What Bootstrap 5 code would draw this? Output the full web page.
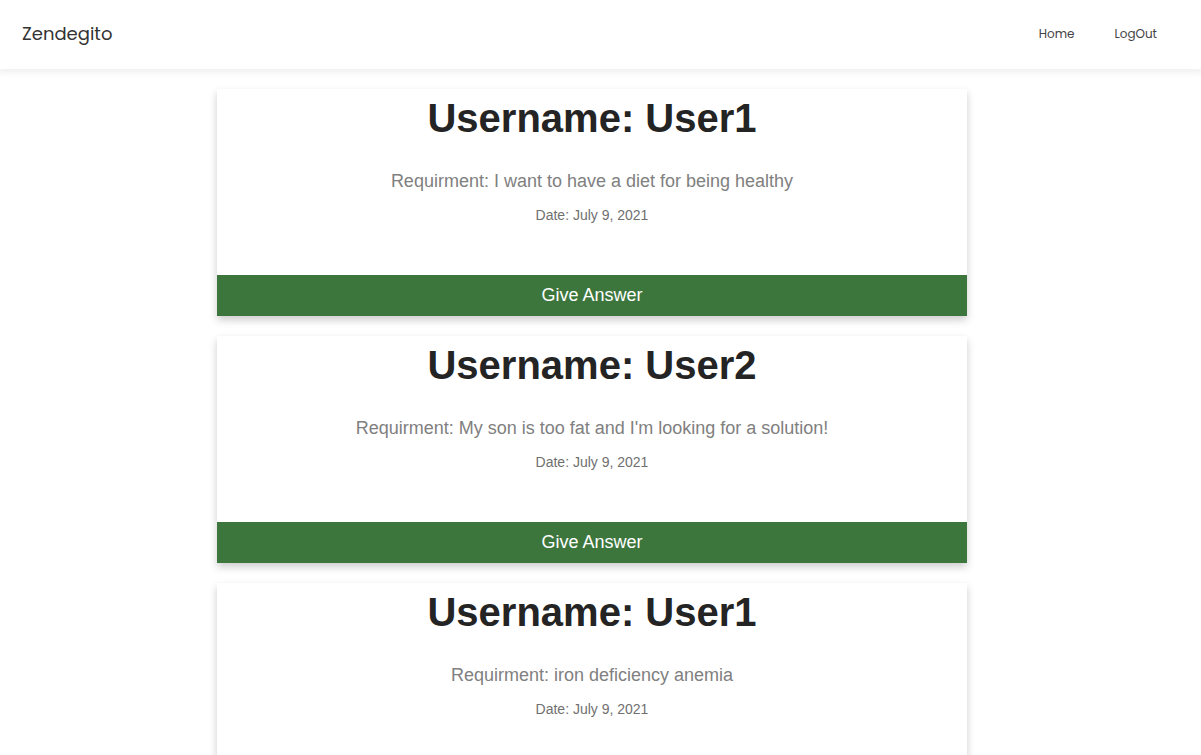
<!DOCTYPE html>
<html lang="en">
<head>
<meta charset="utf-8">
<meta name="viewport" content="width=device-width, initial-scale=1">
<title>Zendegito</title>
<link href="https://cdn.jsdelivr.net/npm/bootstrap@5.3.0/dist/css/bootstrap.min.css" rel="stylesheet">
<style>
body { font-family: "Liberation Sans", Arial, sans-serif; background: #fff; color: #212529; }
.site-nav { min-height: 69px; padding: 0 36px 2px 22px; font-family: Poppins, Inter, sans-serif; background: #fff; box-shadow: 0 2px 6px 2px rgba(0,0,0,.06); }
.site-nav .navbar-brand { font-size: 18px; line-height: 24px; color: #333; }
.site-nav .nav-link { font-size: 12px; line-height: 20px; color: #444; }
.request-list { gap: 20px; padding: 20px 17px 20px 0; }
.request-card { width: 750px; max-width: 100%; background: #fff; box-shadow: 0 4px 8px 0 rgba(0,0,0,.2); }
.request-card h1 { font-size: 40px; line-height: 58px; font-weight: 700; margin-bottom: 21px; color: #242424; }
.request-text { font-size: 18px; line-height: 27px; color: #808080; margin-bottom: 10px; }
.request-date { font-size: 14px; line-height: 21px; color: #707070; margin-bottom: 49px; }
.btn-answer { font-size: 18px; line-height: 25px; padding: 8px; background: #3c763d; color: #fff; border: 0; }
.btn-answer:hover { background: #2f612f; color: #fff; }
</style>
</head>
<body>
<nav class="site-nav navbar navbar-expand">
  <div class="container-fluid p-0">
    <a class="navbar-brand" href="#">Zendegito</a>
    <ul class="navbar-nav gap-4">
      <li class="nav-item"><a class="nav-link" href="#">Home</a></li>
      <li class="nav-item"><a class="nav-link" href="#">LogOut</a></li>
    </ul>
  </div>
</nav>
<main class="request-list d-flex flex-column align-items-center">
  <article class="request-card text-center">
    <h1>Username: User1</h1>
    <p class="request-text">Requirment: I want to have a diet for being healthy</p>
    <p class="request-date">Date: July 9, 2021</p>
    <button type="button" class="btn btn-answer w-100 rounded-0">Give Answer</button>
  </article>
  <article class="request-card text-center">
    <h1>Username: User2</h1>
    <p class="request-text">Requirment: My son is too fat and I'm looking for a solution!</p>
    <p class="request-date">Date: July 9, 2021</p>
    <button type="button" class="btn btn-answer w-100 rounded-0">Give Answer</button>
  </article>
  <article class="request-card text-center">
    <h1>Username: User1</h1>
    <p class="request-text">Requirment: iron deficiency anemia</p>
    <p class="request-date">Date: July 9, 2021</p>
    <button type="button" class="btn btn-answer w-100 rounded-0">Give Answer</button>
  </article>
</main>
<script src="https://cdn.jsdelivr.net/npm/bootstrap@5.3.0/dist/js/bootstrap.bundle.min.js"></script>
</body>
</html>
